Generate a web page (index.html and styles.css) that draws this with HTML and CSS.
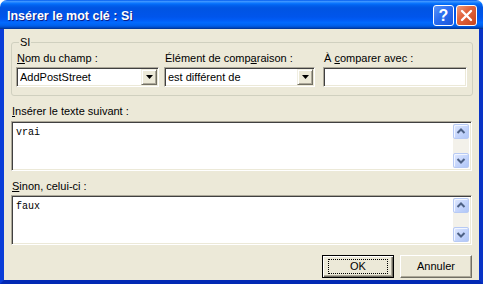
FILE: index.html
```html
<!DOCTYPE html>
<html lang="fr">
<head>
    <meta charset="UTF-8">
    <title>Insérer le mot clé : Si</title>
    <link rel="stylesheet" href="styles.css">
</head>
<body>
<div class="window">
    <div class="titlebar">
        <span class="title">Insérer le mot clé : Si</span>
        <span class="tb-btn tb-help">?</span>
        <span class="tb-btn tb-close">
            <svg width="13" height="13" viewBox="0 0 13 13"><path d="M2 2 L11 11 M11 2 L2 11" stroke="#fff" stroke-width="2.4" stroke-linecap="round"/></svg>
        </span>
    </div>
    <div class="client">
        <fieldset class="group">
            <legend>SI</legend>
            <div class="fields">
                <div class="field field-name">
                    <label><u>N</u>om du champ :</label>
                    <div class="sunken combo">
                        <span class="combo-value">AddPostStreet</span>
                        <span class="combo-btn"><svg width="7" height="4" viewBox="0 0 7 4"><path d="M0 0 H7 L3.5 4 Z" fill="#000"/></svg></span>
                    </div>
                </div>
                <div class="field field-op">
                    <label>Élément de comp<u>a</u>raison :</label>
                    <div class="sunken combo">
                        <span class="combo-value">est différent de</span>
                        <span class="combo-btn"><svg width="7" height="4" viewBox="0 0 7 4"><path d="M0 0 H7 L3.5 4 Z" fill="#000"/></svg></span>
                    </div>
                </div>
                <div class="field field-value">
                    <label>À <u>c</u>omparer avec :</label>
                    <div class="sunken combo"></div>
                </div>
            </div>
        </fieldset>

        <label class="area-label"><u>I</u>nsérer le texte suivant :</label>
        <div class="sunken textbox tb-first">
            <div class="textbox-text">vrai</div>
            <div class="scrollbar">
                <span class="sb-btn"><svg width="16" height="15" viewBox="0 0 16 15"><path d="M4.5 9 L8 5.5 L11.5 9" fill="none" stroke="#4d6185" stroke-width="2"/></svg></span>
                <span class="sb-btn"><svg width="16" height="15" viewBox="0 0 16 15"><path d="M4.5 6 L8 9.5 L11.5 6" fill="none" stroke="#4d6185" stroke-width="2"/></svg></span>
            </div>
        </div>

        <label class="area-label"><u>S</u>inon, celui-ci :</label>
        <div class="sunken textbox tb-second">
            <div class="textbox-text">faux</div>
            <div class="scrollbar">
                <span class="sb-btn"><svg width="16" height="15" viewBox="0 0 16 15"><path d="M4.5 9 L8 5.5 L11.5 9" fill="none" stroke="#4d6185" stroke-width="2"/></svg></span>
                <span class="sb-btn"><svg width="16" height="15" viewBox="0 0 16 15"><path d="M4.5 6 L8 9.5 L11.5 6" fill="none" stroke="#4d6185" stroke-width="2"/></svg></span>
            </div>
        </div>

        <div class="buttons">
            <div class="btn btn-default"><span class="btn-focus">OK</span></div>
            <div class="btn">Annuler</div>
        </div>
    </div>
</div>
</body>
</html>
```

FILE: styles.css
```css
html, body {
    margin: 0;
    padding: 0;
    background: #ffffff;
}

body {
    font-family: "Liberation Sans", Arial, sans-serif;
    font-size: 11px;
    line-height: 13px;
    color: #000000;
}

.window {
    width: 483px;
    height: 284px;
    display: flex;
    flex-direction: column;
}

/* barre de titre XP */
.titlebar {
    height: 29px;
    box-sizing: border-box;
    display: flex;
    align-items: center;
    padding: 0 6px 0 7px;
    border-radius: 7px 7px 0 0;
    background: linear-gradient(#0058ee 0%, #3d95ff 5%, #1f83ff 9%, #036ffc 13%, #0262ee 18%, #0057e5 25%, #0054e3 30%, #0055eb 58%, #005bf5 68%, #026afe 78%, #0062ef 87%, #0052d6 93%, #0040ab 97%, #003092 100%);
}

.title {
    flex: 1;
    padding-top: 3px;
    color: #ffffff;
    font-weight: bold;
    font-size: 12.5px;
    text-shadow: 1px 1px #0a1e8a;
}

.tb-btn {
    width: 21px;
    height: 21px;
    box-sizing: border-box;
    border: 1px solid #ffffff;
    border-radius: 3px;
    margin-left: 2px;
    display: flex;
    align-items: center;
    justify-content: center;
    margin-top: 2px;
}

.tb-help {
    background: linear-gradient(135deg, #5b93f7 0%, #2c6ef0 45%, #1b56dc 100%);
    color: #ffffff;
    font-weight: bold;
    font-size: 16px;
    font-family: "Liberation Sans", Arial, sans-serif;
}

.tb-close {
    background: linear-gradient(135deg, #f09a7c 0%, #e2653e 40%, #c8441c 100%);
}

/* zone client */
.client {
    flex: 1;
    display: flex;
    flex-direction: column;
    background: #ece9d8;
    border: 4px solid #0a3dd8;
    border-top: 0;
    border-right-color: #0833c6;
    border-bottom-color: #0229b4;
    padding: 7px 7px 0 7px;
}

.group {
    margin: 0;
    padding: 3px 5px 8px 4px;
    border: 1px solid #d0d0bf;
    border-radius: 3px;
}

.group legend {
    padding: 0 1px;
    margin-left: 3px;
}

.fields {
    display: flex;
}

.field {
    display: flex;
    flex-direction: column;
    gap: 2px;
}

.field-name {
    width: 143px;
}

.field-op {
    width: 151px;
    margin-left: 5px;
}

.field-value {
    width: 144px;
    margin-left: 8px;
}

.field label {
    padding-left: 1px;
}

/* bordure 3D enfoncée classique */
.sunken {
    box-sizing: border-box;
    background: #ffffff;
    border: 1px solid;
    border-color: #aca899 #ffffff #ffffff #aca899;
    box-shadow: inset 1px 1px #404040, inset -1px -1px #ece9d8;
}

.combo {
    height: 20px;
    display: flex;
    align-items: center;
    padding: 1px 1px 1px 3px;
}

.combo-value {
    flex: 1;
    white-space: nowrap;
    overflow: hidden;
}

.combo-btn {
    width: 16px;
    height: 16px;
    box-sizing: border-box;
    display: flex;
    align-items: center;
    justify-content: center;
    background: #ece9d8;
    border: 1px solid;
    border-color: #f1efe2 #716f64 #716f64 #f1efe2;
    box-shadow: inset 1px 1px #ffffff, inset -1px -1px #aca899;
}

.area-label {
    margin-top: 9px;
    padding-left: 1px;
}

.textbox {
    display: flex;
    margin-top: 3px;
    padding: 2px 2px 2px 2px;
}

.tb-first {
    height: 50px;
}

.tb-second {
    height: 50px;
    margin-top: 2px;
}

.textbox-text {
    flex: 1;
    font-family: "Liberation Mono", "Courier New", monospace;
    font-size: 10px;
    line-height: 12px;
    padding: 3px 2px;
}

.scrollbar {
    width: 16px;
    display: flex;
    flex-direction: column;
    justify-content: space-between;
    background: #f3f1ea;
}

.sb-btn {
    width: 16px;
    height: 15px;
    box-sizing: border-box;
    border: 1px solid #b7caf5;
    border-radius: 2px;
    background: linear-gradient(135deg, #dfe8fe 0%, #c6d6fc 50%, #b0c6f7 100%);
    box-shadow: inset 1px 1px #f2f6ff;
    display: flex;
}

.sb-btn svg {
    margin: -1px;
}

/* boutons */
.buttons {
    display: flex;
    justify-content: flex-end;
    gap: 6px;
    margin-top: 10px;
}

.btn {
    width: 72px;
    height: 23px;
    box-sizing: border-box;
    display: flex;
    align-items: center;
    justify-content: center;
    background: #ece9d8;
    border: 1px solid;
    border-color: #ffffff #716f64 #716f64 #ffffff;
    box-shadow: inset -1px -1px #aca899;
}

.btn-default {
    border: 1px solid #000000;
    box-shadow: inset 1px 1px #ffffff, inset -1px -1px #716f64, inset -2px -2px #aca899;
}

.btn-focus {
    width: 60px;
    height: 15px;
    box-sizing: border-box;
    border: 1px dotted #000000;
    display: flex;
    align-items: center;
    justify-content: center;
}
```
